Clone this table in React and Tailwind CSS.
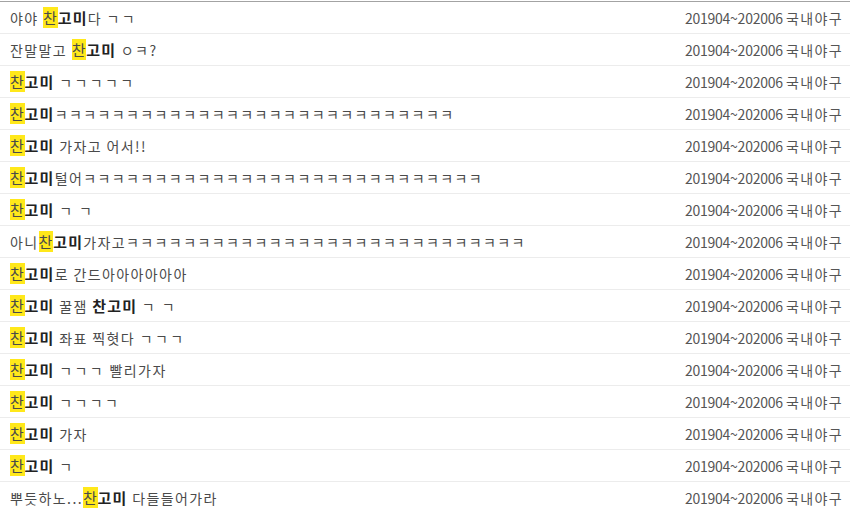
import React from "react";

const T = ({ s }) => {
  const parts = s.split(/([\u3131-\u318E]+)/);
  return (
    <>
      {parts.map((p, i) =>
        /^[\u3131-\u318E]+$/.test(p) ? (
          <span key={i} className={p.includes("ㅋ") ? "tracking-[1.4px]" : "tracking-[2.4px]"}>{p}</span>
        ) : (
          <span key={i}>{p}</span>
        )
      )}
    </>
  );
};

const B = ({ children }) => (
  <b className="font-bold text-[#222] text-[15px] tracking-[1.2px]">{children}</b>
);

const H = () => (
  <>
    <span className="bg-[#ffe81a] text-[15px] tracking-[0.8px]">찬</span>
    <B>고미</B>
  </>
);

const K28 = "ㅋㅋㅋㅋㅋㅋㅋㅋㅋㅋㅋㅋㅋㅋㅋㅋㅋㅋㅋㅋㅋㅋㅋㅋㅋㅋㅋㅋ";

const rows = [
  <><T s="야야 " /><H /><T s="다 ㄱㄱ" /></>,
  <><T s="잔말말고 " /><H /><T s=" ㅇㅋ?" /></>,
  <><H /><T s=" ㄱㄱㄱㄱㄱ" /></>,
  <><H /><T s={K28} /></>,
  <><H /><T s=" 가자고 어서!!" /></>,
  <><H /><T s={"털어" + K28} /></>,
  <><H /><T s=" ㄱ ㄱ" /></>,
  <><T s="아니" /><H /><T s={"가자고" + K28} /></>,
  <><H /><T s="로 간드아아아아아아" /></>,
  <><H /><T s=" 꿀잼 " /><B>찬고미</B><T s=" ㄱ ㄱ" /></>,
  <><H /><T s=" 좌표 찍혓다 ㄱㄱㄱ" /></>,
  <><H /><T s=" ㄱㄱㄱ 빨리가자" /></>,
  <><H /><T s=" ㄱㄱㄱㄱ" /></>,
  <><H /><T s=" 가자" /></>,
  <><H /><T s=" ㄱ" /></>,
  <><T s="뿌듯하노..." /><H /><T s=" 다들들어가라" /></>,
];

export default function App() {
  return (
    <div
      className="w-[850px] h-[513px] bg-white overflow-hidden pt-px"
      style={{ fontFamily: '"Noto Sans CJK KR", "Noto Sans", sans-serif' }}
    >
      <div className="border-t border-[#a3a3a3]">
        {rows.map((r, i) => (
          <div
            key={i}
            className="h-8 flex items-center justify-between pl-[10px] pr-[7px] border-b border-[#ececec] text-[14px] text-[#4a4a4a] whitespace-nowrap"
          >
            <div className="leading-5 tracking-[1.4px]">{r}</div>
            <div className="text-[#555] leading-5">
              <span className="tracking-[-0.25px]">201904~202006</span>{" "}
              <span className="tracking-[1.4px]">국내야구</span>
            </div>
          </div>
        ))}
      </div>
    </div>
  );
}
